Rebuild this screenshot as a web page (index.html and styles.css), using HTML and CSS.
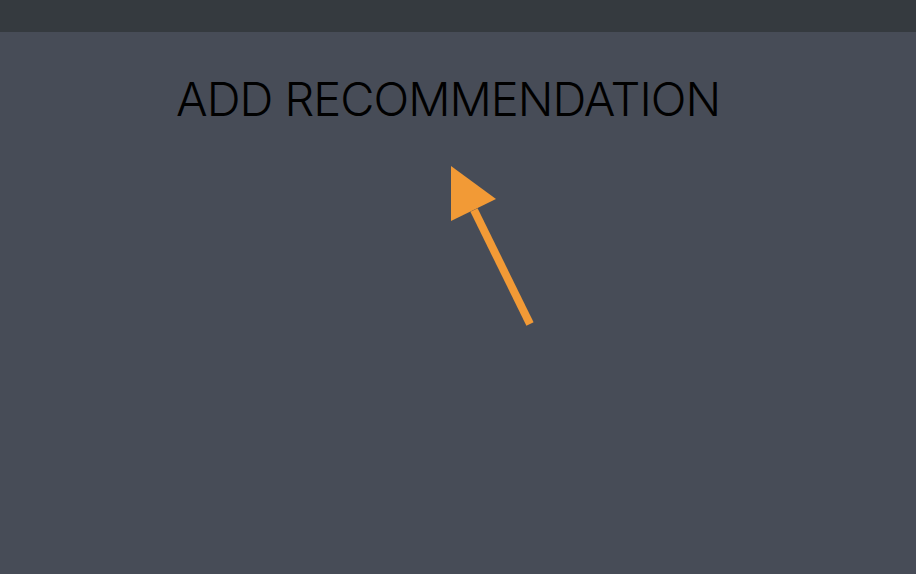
FILE: index.html
```html
<!DOCTYPE html>
<html>
<head>
<meta charset="utf-8">
<link rel="stylesheet" href="styles.css">
</head>
<body>
<div class="topbar"></div>
<main class="stage">
  <h1 class="title">ADD RECOMMENDATION</h1>
  <svg class="arrow" width="916" height="542" viewBox="0 32 916 542" xmlns="http://www.w3.org/2000/svg">
    <line x1="530" y1="324" x2="474" y2="210" stroke="#f29a36" stroke-width="8"/>
    <polygon points="451,166 496,199 451,221" fill="#f29a36"/>
  </svg>
</main>
</body>
</html>
```
FILE: styles.css
```css
html, body {
  margin: 0;
  padding: 0;
  width: 916px;
  height: 574px;
  overflow: hidden;
  background: #474c57;
  font-family: Inter, "Liberation Sans", sans-serif;
}
.topbar {
  height: 32px;
  background: #353a3f;
}
.stage {
  position: relative;
  height: 542px;
  background: #474c57;
}
.title {
  margin: 0;
  padding-top: 39px;
  padding-left: 176px;
  font-size: 47px;
  line-height: 56px;
  font-weight: 300;
  color: #000;
  letter-spacing: -1px;
  white-space: nowrap;
}
.arrow {
  position: absolute;
  left: 0;
  top: 0;
}
```
